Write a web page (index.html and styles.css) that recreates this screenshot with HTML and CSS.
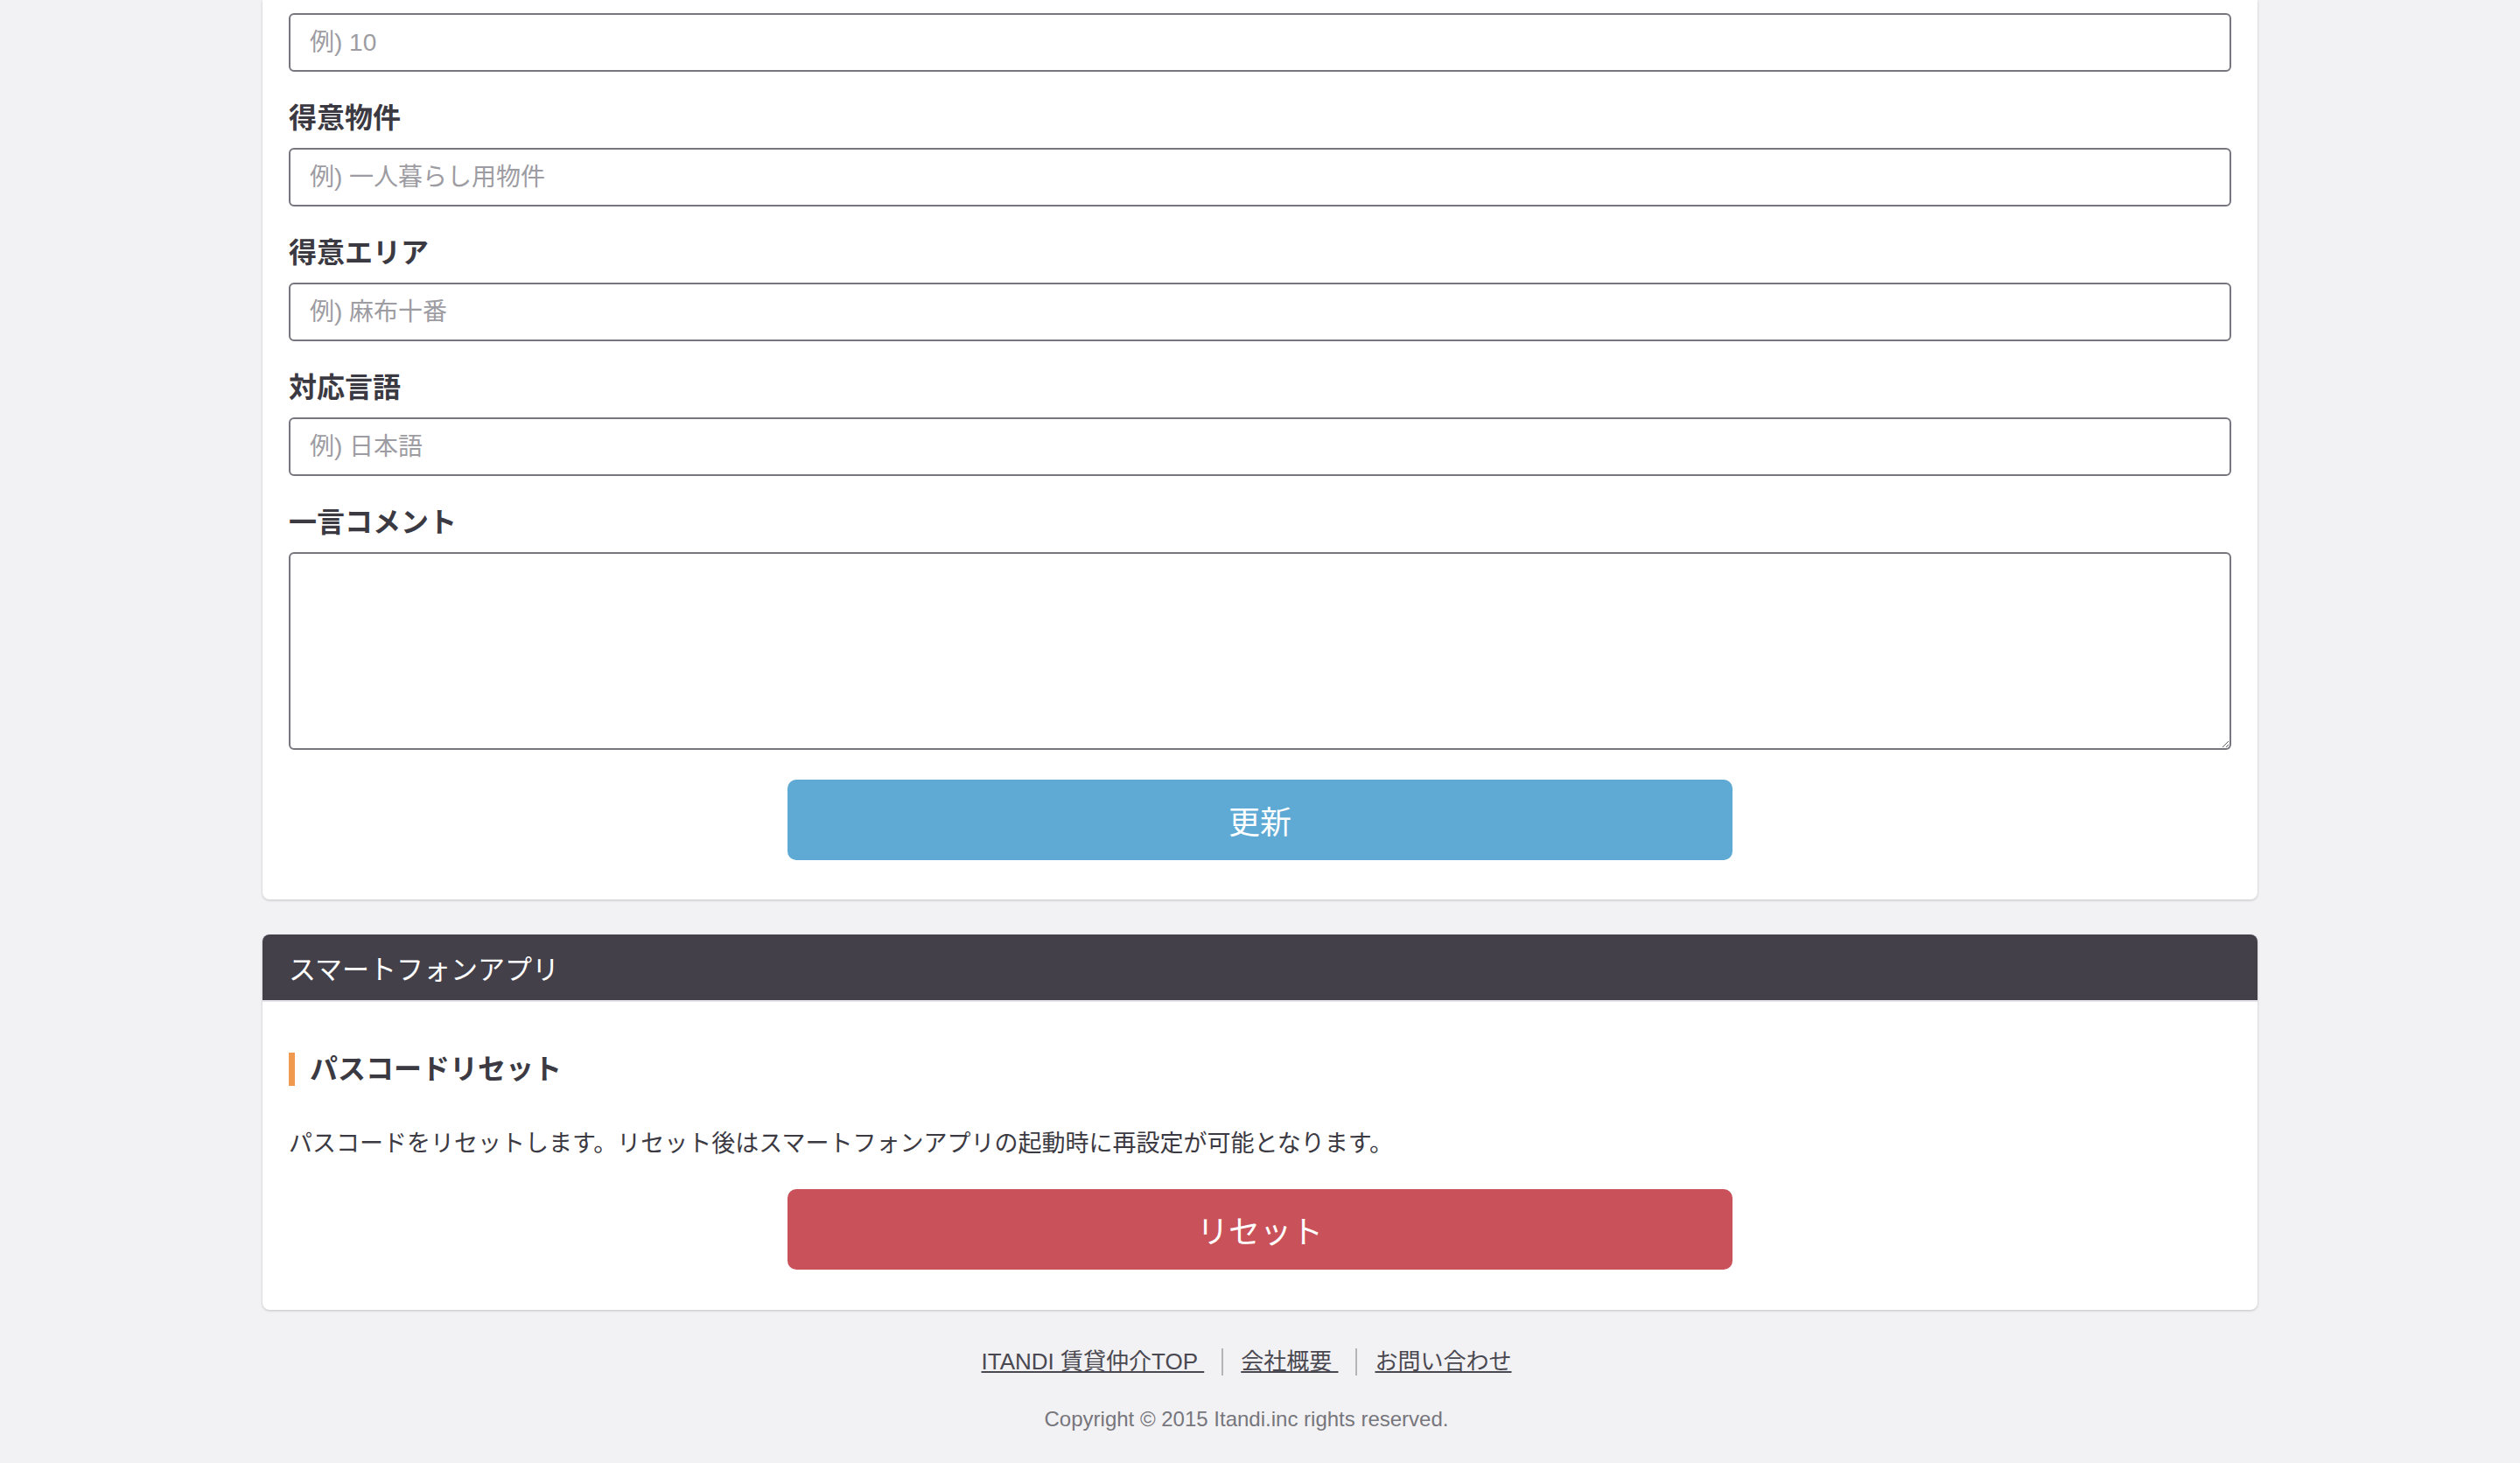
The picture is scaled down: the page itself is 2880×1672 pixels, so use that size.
FILE: index.html
```html
<!DOCTYPE html>
<html lang="ja">
<head>
<meta charset="utf-8">
<title>プロフィール設定</title>
<link rel="stylesheet" href="styles.css">
</head>
<body>
<div class="page">
  <section class="card card-form">
    <input class="input input-first" type="text" placeholder="例) 10">

    <label class="field-label" for="f-property">得意物件</label>
    <input class="input" id="f-property" type="text" placeholder="例) 一人暮らし用物件">

    <label class="field-label" for="f-area">得意エリア</label>
    <input class="input" id="f-area" type="text" placeholder="例) 麻布十番">

    <label class="field-label" for="f-lang">対応言語</label>
    <input class="input" id="f-lang" type="text" placeholder="例) 日本語">

    <label class="field-label" for="f-comment">一言コメント</label>
    <textarea class="input textarea" id="f-comment"></textarea>

    <button class="btn btn-blue" type="button">更新</button>
  </section>

  <section class="card card-app">
    <div class="card-header">スマートフォンアプリ</div>
    <div class="card-body">
      <h3 class="section-title">パスコードリセット</h3>
      <p class="desc">パスコードをリセットします。リセット後はスマートフォンアプリの起動時に再設定が可能となります。</p>
      <button class="btn btn-red" type="button">リセット</button>
    </div>
  </section>
</div>

<footer class="footer">
  <nav class="links">
    <a href="#">ITANDI 賃貸仲介TOP&nbsp;</a>
    <span class="sep"></span>
    <a href="#">会社概要&nbsp;</a>
    <span class="sep"></span>
    <a href="#">お問い合わせ</a>
  </nav>
  <p class="copyright">Copyright © 2015 Itandi.inc rights reserved.</p>
</footer>
</body>
</html>
```

FILE: styles.css
```css
html, body {
  margin: 0;
  padding: 0;
}

body {
  background: #f2f2f5;
  font-family: "Liberation Sans", "Noto Sans CJK JP", sans-serif;
  color: #3b3942;
}

.page {
  width: 2280px;
  margin: 0 auto;
}

.card {
  background: #ffffff;
  border-radius: 8px;
  box-shadow: 0 1px 3px rgba(0, 0, 0, 0.2);
}

.card-form {
  border-radius: 0 0 8px 8px;
  padding: 15px 30px 45px;
}

.field-label {
  display: block;
  font-size: 32px;
  font-weight: 700;
  line-height: 48px;
  margin: 29px 0 10px;
  color: #3b3942;
}

.input {
  display: block;
  width: 100%;
  box-sizing: border-box;
  height: 67px;
  border: 2px solid #77757d;
  border-radius: 6px;
  padding: 0 22px;
  font-family: "Liberation Sans", "Noto Sans CJK JP", sans-serif;
  font-size: 28px;
  color: #333;
  background: #fff;
  outline: none;
}

.input::placeholder {
  color: #9d9ca2;
}

.textarea {
  height: 226px;
  resize: vertical;
  padding: 16px 22px;
}

.btn {
  display: block;
  width: 1080px;
  height: 92px;
  margin: 34px auto 0;
  border: 0;
  border-radius: 10px;
  color: #ffffff;
  font-family: "Liberation Sans", "Noto Sans CJK JP", sans-serif;
  font-size: 36px;
  cursor: pointer;
}

.btn-blue {
  background: #5eaad5;
}

.btn-red {
  background: #c9525a;
  margin-top: 32px;
}

.card-app {
  margin-top: 40px;
  overflow: hidden;
}

.card-header {
  background: #43404a;
  color: #ffffff;
  height: 75px;
  border-bottom: 2px solid #e4e4ea;
  padding: 0 30px;
  display: flex;
  align-items: center;
  font-size: 31px;
}

.card-body {
  padding: 58px 30px 46px;
}

.section-title {
  margin: 0;
  border-left: 7px solid #ef9a4e;
  padding-left: 17px;
  font-size: 32px;
  font-weight: 700;
  line-height: 38px;
  color: #3b3942;
}

.desc {
  margin: 46px 0 0;
  font-size: 27px;
  line-height: 40px;
  color: #3b3942;
}

.footer {
  padding: 41px 31px 0 0;
  text-align: center;
}

.links {
  display: flex;
  justify-content: center;
  align-items: center;
  font-size: 26px;
  line-height: 36px;
}

.links a {
  color: #4a4850;
  text-decoration: underline;
}

.sep {
  width: 2px;
  height: 31px;
  background: #b5b4b9;
  margin: 0 20px;
}

.copyright {
  margin: 33px 0 0;
  font-size: 24px;
  line-height: 30px;
  color: #77767c;
}
```
